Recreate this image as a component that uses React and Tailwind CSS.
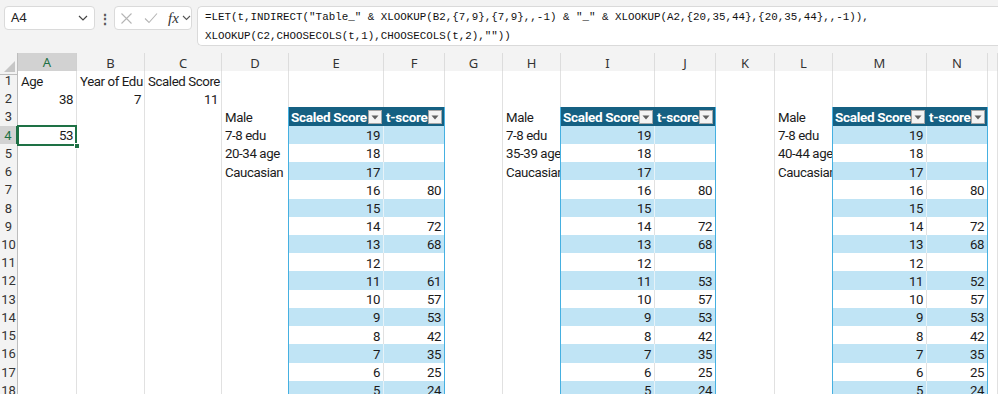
import React from 'react';

const COLS = 'grid grid-cols-[18px_59px_68px_77px_67px_95px_61px_58px_58px_94px_61px_59px_58px_94px_61px_1fr]';
const LETTERS = ['', 'A', 'B', 'C', 'D', 'E', 'F', 'G', 'H', 'I', 'J', 'K', 'L', 'M', 'N', ''];

const tE = { 7: 80, 9: 72, 10: 68, 12: 61, 13: 57, 14: 53, 15: 42, 16: 35, 17: 25, 18: 24 };
const tI = { ...tE, 12: 53 };
const tM = { ...tE, 12: 52 };

const labels = {
  4: { 3: 'Male', 4: '7-8 edu', 5: '20-34 age', 6: 'Caucasian' },
  8: { 3: 'Male', 4: '7-8 edu', 5: '35-39 age', 6: 'Caucasian' },
  12: { 3: 'Male', 4: '7-8 edu', 5: '40-44 age', 6: 'Caucasian' },
};

const tables = { 5: ['s', tE], 6: ['t', tE], 9: ['s', tI], 10: ['t', tI], 13: ['s', tM], 14: ['t', tM] };

function FilterBtn() {
  return (
    <span className="ml-auto mr-[1px] flex h-[14px] w-[14px] shrink-0 items-center justify-center border border-[#a6a6a6] bg-[#f3f3f3]">
      <svg width="8" height="5" viewBox="0 0 8 5"><path d="M0.5 0.5 L7.5 0.5 L4 4.5 Z" fill="#5f5f5f" /></svg>
    </span>
  );
}

function Cell({ r, c }) {
  const base = 'h-full overflow-hidden whitespace-nowrap flex items-end px-[3px] pb-[1px] text-[13.25px] tracking-[-0.4px] leading-[16px] text-[#1b1b1b]';
  const inTable = tables[c] && r >= 3;
  const isLeftOfTable = (c === 4 || c === 8 || c === 12) && r >= 3;
  const isTableRightCol = (c === 6 || c === 10 || c === 14) && r >= 3;
  const isAboveTable = r === 2 && (c === 5 || c === 6 || c === 9 || c === 10 || c === 13 || c === 14);

  let content = null;
  let align = 'justify-start';
  let cls = 'bg-white border-r border-b border-[#e1e1e1]';

  if (r === 1) {
    if (c === 1) content = 'Age';
    if (c === 2) content = 'Year of Edu';
    if (c === 3) content = 'Scaled Score';
  }
  if (r === 2) {
    if (c === 1) content = '38';
    if (c === 2) content = '7';
    if (c === 3) content = '11';
    align = 'justify-end';
  }
  if (labels[c] && labels[c][r]) content = labels[c][r];

  if (isLeftOfTable) cls = 'bg-white border-r border-b border-r-[#45b0e1] border-b-[#e1e1e1]';
  if (isAboveTable) cls = 'bg-white border-r border-b border-r-[#e1e1e1] border-b-[#45b0e1]';

  if (inTable) {
    const [kind, map] = tables[c];
    if (r === 3) {
      const rightB = isTableRightCol ? 'border-r border-r-[#45b0e1]' : '';
      return (
        <div className={`h-full overflow-hidden whitespace-nowrap flex items-center pl-[2px] pr-[1px] bg-[#156082] border-b border-b-[#45b0e1] ${rightB}`}>
          <span className="text-[13.5px] tracking-[-0.3px] font-bold leading-[16px] text-white">{kind === 's' ? 'Scaled Score' : 't-score'}</span>
          <FilterBtn />
        </div>
      );
    }
    const band = (r - 4) % 2 === 0;
    if (kind === 's') content = String(23 - r);
    else content = map[r] !== undefined ? String(map[r]) : null;
    align = 'justify-end';
    if (band) {
      cls = isTableRightCol
        ? 'bg-[#c0e4f5] border-r border-b border-r-[#45b0e1] border-b-[#45b0e1]'
        : 'bg-[#c0e4f5] border-r border-b border-r-[#e6f2f8] border-b-[#45b0e1]';
    } else {
      cls = isTableRightCol
        ? 'bg-white border-r border-b border-r-[#45b0e1] border-b-[#45b0e1]'
        : 'bg-white border-r border-b border-r-[#e1e1e1] border-b-[#45b0e1]';
    }
  }

  if (r === 4 && c === 1) {
    return (
      <div className="relative h-full bg-white border-r border-b border-[#e1e1e1]">
        <div className="absolute -left-[1px] -top-[1px] right-[-1px] bottom-[-1px] z-10 flex items-end justify-end border-2 border-[#1e7145] px-[2px] pb-[0px] text-[13.25px] tracking-[-0.4px] leading-[16px] text-[#1b1b1b]">
          53
        </div>
        <div className="absolute -bottom-[4px] -right-[4px] z-20 h-[6px] w-[6px] border border-white bg-[#1e7145]" />
      </div>
    );
  }

  return <div className={`${base} ${align} ${cls}`}>{content}</div>;
}

function RowHeader({ r }) {
  const sel = r === 4;
  return (
    <div
      className={
        sel
          ? 'h-full flex items-center justify-center bg-[#d2d2d2] border-r-2 border-r-[#1e7145] border-b border-b-[#d0d0d0] text-[13px] text-[#1e7145]'
          : 'h-full flex items-center justify-center bg-[#f3f3f3] border-r border-r-[#bdbdbd] border-b border-b-[#dcdcdc] text-[13px] text-[#333]'
      }
    >
      {r}
    </div>
  );
}

export default function App() {
  const rows = Array.from({ length: 18 }, (_, i) => i + 1);
  const cols = Array.from({ length: 15 }, (_, i) => i + 1);
  return (
    <div className="h-[394px] w-[998px] overflow-hidden bg-[#f3f3f3] font-['Roboto','Liberation_Sans',sans-serif]">
      {/* formula bar */}
      <div className="flex h-[53px] items-start gap-0 pt-[6px] font-['Noto_Sans','Liberation_Sans',sans-serif]">
        <div className="ml-[4px] flex h-[24px] w-[91px] items-center justify-between rounded-[4px] border border-[#dadada] bg-white pl-[6px] pr-[6px] text-[13px] text-[#222]">
          <span>A4</span>
          <svg width="10" height="6" viewBox="0 0 10 6"><path d="M1 1 L5 5 L9 1" fill="none" stroke="#444" strokeWidth="1.2" /></svg>
        </div>
        <div className="flex h-[24px] w-[19px] items-center justify-center text-[14px] font-bold text-[#555]">⋮</div>
        <div className="flex h-[24px] w-[78px] items-center rounded-[4px] border border-[#dadada] bg-white pl-[5px]">
          <svg width="13" height="13" viewBox="0 0 13 13"><path d="M1.5 1.5 L11.5 11.5 M11.5 1.5 L1.5 11.5" stroke="#b5b5b5" strokeWidth="1.1" /></svg>
          <svg className="ml-[11px]" width="14" height="12" viewBox="0 0 14 12"><path d="M1 6.5 L5 10.5 L13 1.5" fill="none" stroke="#b5b5b5" strokeWidth="1.1" /></svg>
          <span className="ml-[10px] font-['Liberation_Serif',serif] text-[15px] italic leading-none text-[#333]">fx</span>
          <svg className="ml-[3px]" width="9" height="6" viewBox="0 0 9 6"><path d="M1 1 L4.5 4.5 L8 1" fill="none" stroke="#555" strokeWidth="1.1" /></svg>
        </div>
        <div className="ml-[5px] h-[40px] flex-1 rounded-l-[5px] border border-r-0 border-[#dadada] bg-white pl-[7px] pt-[1px] font-['Liberation_Mono',monospace] text-[10.85px] leading-[19px] text-[#111] whitespace-pre">
          <div>{'=LET(t,INDIRECT("Table_" & XLOOKUP(B2,{7,9},{7,9},,-1) & "_" & XLOOKUP(A2,{20,35,44},{20,35,44},,-1)),'}</div>
          <div>{'XLOOKUP(C2,CHOOSECOLS(t,1),CHOOSECOLS(t,2),""))'}</div>
        </div>
      </div>

      {/* column headers */}
      <div className={`${COLS} h-[18px]`}>
        <div className="relative h-full bg-[#f3f3f3] border-r border-b border-[#bdbdbd]">
          <svg className="absolute bottom-[2px] right-[2px]" width="11" height="11" viewBox="0 0 11 11"><path d="M11 0 L11 11 L0 11 Z" fill="#c6c6c6" /></svg>
        </div>
        {cols.map((c) => (
          <div
            key={c}
            className={
              c === 1
                ? 'h-full flex items-center justify-center bg-[#d2d2d2] border-r border-r-[#d0d0d0] border-b-2 border-b-[#1e7145] text-[13px] text-[#1e7145] font-["Noto_Sans",sans-serif]'
                : 'h-full flex items-center justify-center bg-[#f3f3f3] border-r border-r-[#dcdcdc] border-b border-b-[#bdbdbd] text-[13px] text-[#333] font-["Noto_Sans",sans-serif]'
            }
          >
            {LETTERS[c]}
          </div>
        ))}
      </div>

      {/* rows */}
      {rows.map((r) => (
        <div key={r} className={`${COLS} h-[18.22px]`}>
          <RowHeader r={r} />
          {cols.map((c) => (
            <Cell key={c} r={r} c={c} />
          ))}
        </div>
      ))}
    </div>
  );
}
